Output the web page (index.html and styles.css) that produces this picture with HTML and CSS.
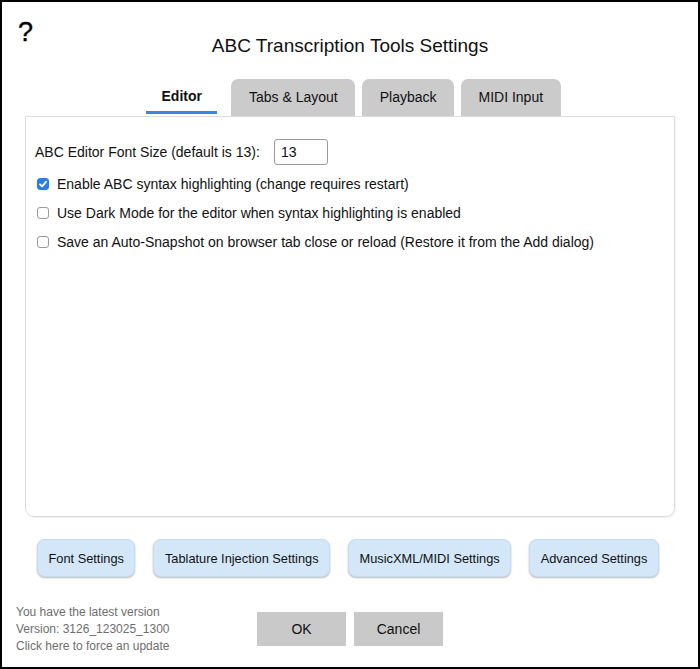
FILE: index.html
```html
<!DOCTYPE html>
<html>
<head>
<meta charset="utf-8">
<link rel="stylesheet" href="styles.css">
</head>
<body>
<div class="window">
  <div class="header">
    <div class="help">?</div>
    <div class="title">ABC Transcription Tools Settings</div>
    <div></div>
  </div>
  <div class="tabs">
    <div class="tab active">Editor</div>
    <div class="tab">Tabs &amp; Layout</div>
    <div class="tab">Playback</div>
    <div class="tab">MIDI Input</div>
  </div>
  <div class="panel">
    <div class="row">
      <span class="label">ABC Editor Font Size (default is 13):</span>
      <input class="num" type="text" value="13">
    </div>
    <label class="check first">
      <span class="cb on"><svg viewBox="0 0 12 12" width="12" height="12"><path d="M3 6.3 L5.1 8.4 L9.2 3.6" fill="none" stroke="#fff" stroke-width="1.8" stroke-linecap="round" stroke-linejoin="round"/></svg></span>
      <span>Enable ABC syntax highlighting (change requires restart)</span>
    </label>
    <label class="check">
      <span class="cb"></span>
      <span>Use Dark Mode for the editor when syntax highlighting is enabled</span>
    </label>
    <label class="check">
      <span class="cb"></span>
      <span>Save an Auto-Snapshot on browser tab close or reload (Restore it from the Add dialog)</span>
    </label>
  </div>
  <div class="actions">
    <button class="sbtn">Font Settings</button>
    <button class="sbtn">Tablature Injection Settings</button>
    <button class="sbtn">MusicXML/MIDI Settings</button>
    <button class="sbtn">Advanced Settings</button>
  </div>
  <div class="footer">
    <div class="version">
      <div>You have the latest version</div>
      <div>Version: 3126_123025_1300</div>
      <div>Click here to force an update</div>
    </div>
    <div class="okcancel">
      <button class="gbtn">OK</button>
      <button class="gbtn">Cancel</button>
    </div>
    <div></div>
  </div>
</div>
</body>
</html>
```
FILE: styles.css
```css
html, body {
  margin: 0;
  padding: 0;
  background: #fff;
}
body {
  font-family: "Liberation Sans", Arial, Helvetica, sans-serif;
  color: #111;
}
.window {
  width: 700px;
  height: 669px;
  box-sizing: border-box;
  border: 2px solid #000;
  background: #fff;
}
.header {
  display: grid;
  grid-template-columns: 1fr auto 1fr;
  padding-top: 17px;
}
.help {
  font-size: 27px;
  line-height: 27px;
  padding-left: 16px;
  color: #000;
  -webkit-text-stroke: 0.4px #000;
}
.title {
  font-size: 19px;
  line-height: 22px;
  margin-top: 16px;
  color: #111;
}
.tabs {
  display: flex;
  margin-top: 22px;
  padding-left: 144px;
  gap: 7px;
}
.tab {
  height: 37px;
  line-height: 37px;
  font-size: 14px;
  padding: 0 17.5px;
  background: #cbcbcb;
  border-radius: 7px 7px 0 0;
  color: #111;
}
.tab.active {
  background: transparent;
  font-weight: bold;
  padding: 0 15.5px;
  margin-right: 7px;
  border-radius: 0;
  box-shadow: inset 0 -3px 0 #3a87e3;
  height: 35px;
  line-height: 35px;
  margin-bottom: 2px;
}
.panel {
  margin: 0 23px;
  height: 401px;
  box-sizing: border-box;
  border: 1px solid #dcdcdc;
  border-radius: 0 0 9px 9px;
  box-shadow: 1px 1px 1px rgba(0, 0, 0, 0.06);
  padding: 22px 9px 0 9px;
  font-size: 14px;
}
.row {
  display: flex;
  align-items: center;
  height: 26px;
}
.num {
  margin-left: 14px;
  width: 54px;
  height: 26px;
  box-sizing: border-box;
  border: 1px solid #9c9c9c;
  border-radius: 3px;
  padding: 0 6px;
  font-family: inherit;
  font-size: 14px;
  color: #111;
  outline: none;
}
.check {
  display: flex;
  align-items: center;
  height: 29px;
}
.check.first {
  margin-top: 4px;
}
.cb {
  width: 12px;
  height: 12px;
  box-sizing: border-box;
  border: 1px solid #9a9a9a;
  border-radius: 3px;
  margin: 0 8px 0 2px;
  background: #fff;
  display: flex;
  align-items: center;
  justify-content: center;
}
.cb.on {
  background: #2a7de8;
  border-color: #2a7de8;
}
.cb svg {
  display: block;
  flex: none;
}
.actions {
  display: flex;
  gap: 18px;
  margin-top: 22px;
  padding-left: 35px;
}
.sbtn {
  height: 38px;
  padding: 0 10.5px;
  border: 1px solid #c4dcf1;
  border-radius: 8px;
  background: #d3e7f8;
  box-shadow: 0 1px 2px rgba(0, 0, 0, 0.28);
  font-family: inherit;
  font-size: 12.8px;
  color: #111;
}
.footer {
  display: grid;
  grid-template-columns: 1fr auto 1fr;
  margin-top: 27px;
  align-items: start;
}
.version {
  padding-left: 14px;
  font-size: 12px;
  line-height: 17px;
  color: #6e6e6e;
}
.okcancel {
  display: flex;
  gap: 8px;
  margin-top: 8px;
}
.gbtn {
  width: 89px;
  height: 34px;
  border: none;
  border-radius: 0;
  background: #c9c9c9;
  font-family: inherit;
  font-size: 14px;
  color: #111;
}
```
